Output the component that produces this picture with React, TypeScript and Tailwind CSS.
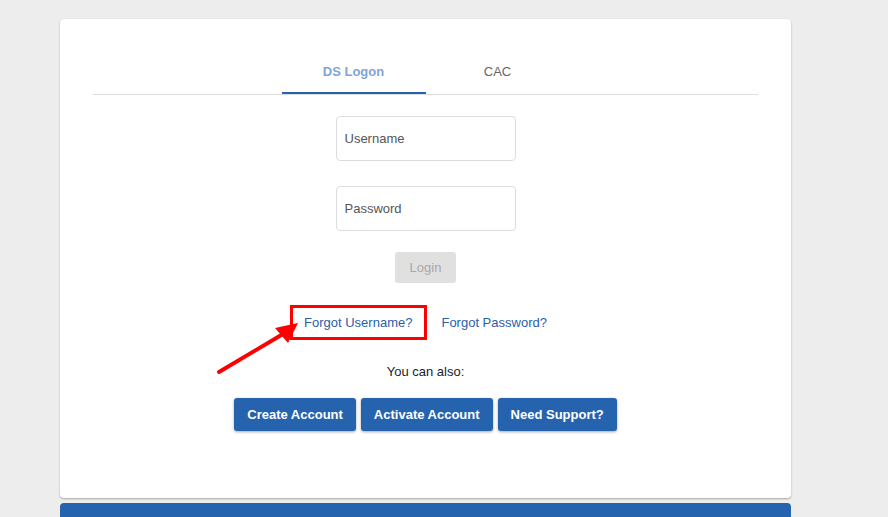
import React from 'react';

const font = { fontFamily: '"Liberation Sans", Arial, sans-serif' };

const ActionButton = ({ label }: { label: string }) => (
  <button className="h-[33px] rounded-[3px] bg-[#2563ae] px-[13px] text-[13px] font-bold text-white shadow-[0_1px_3px_rgba(0,0,0,0.35)]">
    {label}
  </button>
);

const App = () => {
  return (
    <div className="relative h-[517px] w-[888px] overflow-hidden bg-[#ededed]" style={font}>
      <div className="ml-[60px] w-[731px] pt-[19px]">
        <div className="h-[479px] rounded-[4px] bg-white px-[33px] pt-[29px] shadow-[0_1px_2px_rgba(0,0,0,0.3)]">
          <div className="flex justify-center border-b border-[#dddddd]">
            <div className="flex h-[46px] w-[144px] items-center justify-center border-b-2 border-[#2563ae] pt-[4px] text-[13px] font-bold text-[#7fa4d8]">
              DS Logon
            </div>
            <div className="flex h-[46px] w-[144px] items-center justify-center border-b-2 border-transparent pt-[4px] text-[13px] text-[#666666]">
              CAC
            </div>
          </div>

          <div className="flex flex-col items-center">
            <div className="mt-[21px] flex h-[45px] w-[180px] items-center rounded-[4px] border border-[#dddddd] px-[8px] text-[13px] text-[#555555]">
              Username
            </div>
            <div className="mt-[25px] flex h-[45px] w-[180px] items-center rounded-[4px] border border-[#dddddd] px-[8px] text-[13px] text-[#555555]">
              Password
            </div>
            <button className="mt-[21px] h-[31px] w-[61px] rounded-[3px] bg-[#e0e0e0] text-[13px] text-[#a8a8a8]">
              Login
            </button>

            <div className="mt-[30px] flex items-center gap-[29px] text-[13px] text-[#2a5ea8]">
              <span className="relative">
                Forgot Username?
                <span className="absolute -bottom-[7px] -left-[14px] -right-[15px] -top-[8px] border-[3px] border-[#ff0000]" />
              </span>
              <span>Forgot Password?</span>
            </div>

            <div className="mt-[29px] text-[13px] text-[#222222]">You can also:</div>

            <div className="mt-[17px] flex gap-[5px]">
              <ActionButton label="Create Account" />
              <ActionButton label="Activate Account" />
              <ActionButton label="Need Support?" />
            </div>
          </div>
        </div>
        <div className="mt-[5px] h-[20px] rounded-t-[4px] bg-[#2563ae]" />
      </div>

      <svg className="absolute left-0 top-0" width="888" height="517" viewBox="0 0 888 517">
        <line x1="219" y1="372" x2="283" y2="334" stroke="#ff0000" strokeWidth="4" strokeLinecap="round" />
        <polygon points="298,323 275,328 288,343" fill="#ff0000" />
      </svg>
    </div>
  );
};

export default App;
